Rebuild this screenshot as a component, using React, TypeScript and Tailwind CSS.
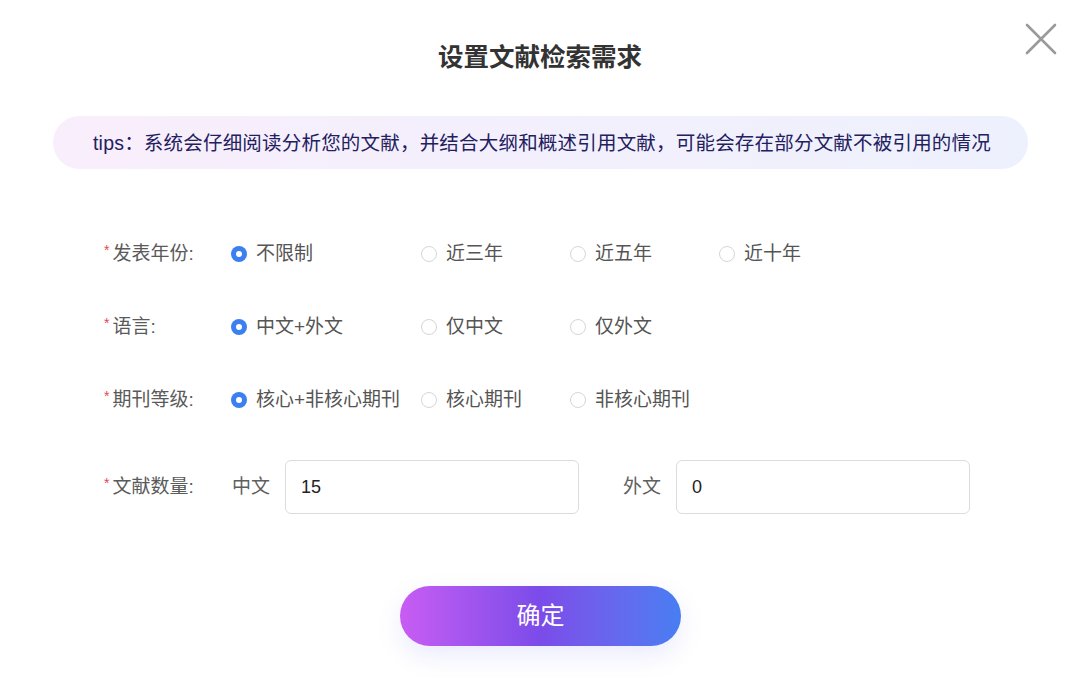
import { useState } from "react";

const groups = [
  {
    key: "year",
    label: "发表年份:",
    options: ["不限制", "近三年", "近五年", "近十年"],
  },
  {
    key: "lang",
    label: "语言:",
    options: ["中文+外文", "仅中文", "仅外文"],
  },
  {
    key: "level",
    label: "期刊等级:",
    options: ["核心+非核心期刊", "核心期刊", "非核心期刊"],
  },
];

const colWidths = ["w-[190px]", "w-[149px]", "w-[149px]", "w-[149px]"];

function Label({ text }: { text: string }) {
  return (
    <div className="flex w-[127px] shrink-0 items-center text-[19px] leading-[26px] text-[#5a5a5a]">
      <span className="mr-[3px] -mt-[8px] text-[14px] leading-none text-[#e5484d]">*</span>
      {text}
    </div>
  );
}

function Radio({ checked }: { checked: boolean }) {
  return checked ? (
    <span className="flex h-[16px] w-[16px] shrink-0 items-center justify-center rounded-full bg-[#3b7ff1]">
      <span className="h-[6px] w-[6px] rounded-full bg-white" />
    </span>
  ) : (
    <span className="h-[16px] w-[16px] shrink-0 rounded-full border border-[#d6d6d6] bg-white" />
  );
}

export default function App() {
  const [values, setValues] = useState<Record<string, number>>({
    year: 0,
    lang: 0,
    level: 0,
  });
  const [cn, setCn] = useState("15");
  const [en, setEn] = useState("0");

  return (
    <div className="relative flex h-[689px] w-[1080px] flex-col bg-white font-['Liberation_Sans','Noto_Sans_CJK_SC',sans-serif]">
      <button className="absolute left-[1025px] top-[23px] h-[32px] w-[32px] text-[#9a9a9a]">
        <svg viewBox="0 0 32 32" className="h-full w-full" fill="none" stroke="currentColor" strokeWidth="2.6" strokeLinecap="round">
          <path d="M2 2 L30 30 M30 2 L2 30" />
        </svg>
      </button>

      <h1 className="pt-[41px] text-center text-[25.5px] font-bold leading-[32px] text-[#333]">
        设置文献检索需求
      </h1>

      <div className="mx-[52px] ml-[53px] mt-[43px] flex h-[53px] items-center rounded-full bg-gradient-to-r from-[#f9eefc] to-[#edf1fd] pl-[40px] text-[19.5px] leading-[26px] tracking-[0.2px] text-[#23205e]">
        tips：系统会仔细阅读分析您的文献，并结合大纲和概述引用文献，可能会存在部分文献不被引用的情况
      </div>

      <div className="ml-[104px] mt-[65px] flex flex-col gap-[33px]">
        {groups.map((g) => (
          <div key={g.key} className="flex h-[40px] items-center">
            <Label text={g.label} />
            {g.options.map((opt, i) => (
              <label
                key={opt}
                onClick={() => setValues({ ...values, [g.key]: i })}
                className={`flex cursor-pointer items-center gap-[9px] ${colWidths[i]} text-[19px] leading-[26px] text-[#555]`}
              >
                <Radio checked={values[g.key] === i} />
                <span className="whitespace-nowrap">{opt}</span>
              </label>
            ))}
          </div>
        ))}
      </div>

      <div className="ml-[104px] mt-[40px] flex h-[54px] items-center">
        <Label text="文献数量:" />
        <span className="ml-[1px] text-[19px] leading-[26px] text-[#5f5f5f]">中文</span>
        <input
          value={cn}
          onChange={(e) => setCn(e.target.value)}
          className="ml-[15px] h-[54px] w-[294px] rounded-[6px] border border-[#dcdcdc] px-[15px] text-[18px] text-[#222] outline-none"
        />
        <span className="ml-[44px] text-[19px] leading-[26px] text-[#5f5f5f]">外文</span>
        <input
          value={en}
          onChange={(e) => setEn(e.target.value)}
          className="ml-[15px] h-[54px] w-[294px] rounded-[6px] border border-[#dcdcdc] px-[15px] text-[18px] text-[#222] outline-none"
        />
      </div>

      <div className="mt-[72px] flex justify-center">
        <button className="ml-[1px] h-[60px] w-[281px] rounded-full bg-gradient-to-r from-[#c85cf3] via-[#7b4be9] to-[#477ef2] text-[24px] leading-[30px] text-white shadow-[0_10px_24px_rgba(110,120,240,0.14)]">
          确定
        </button>
      </div>
    </div>
  );
}
